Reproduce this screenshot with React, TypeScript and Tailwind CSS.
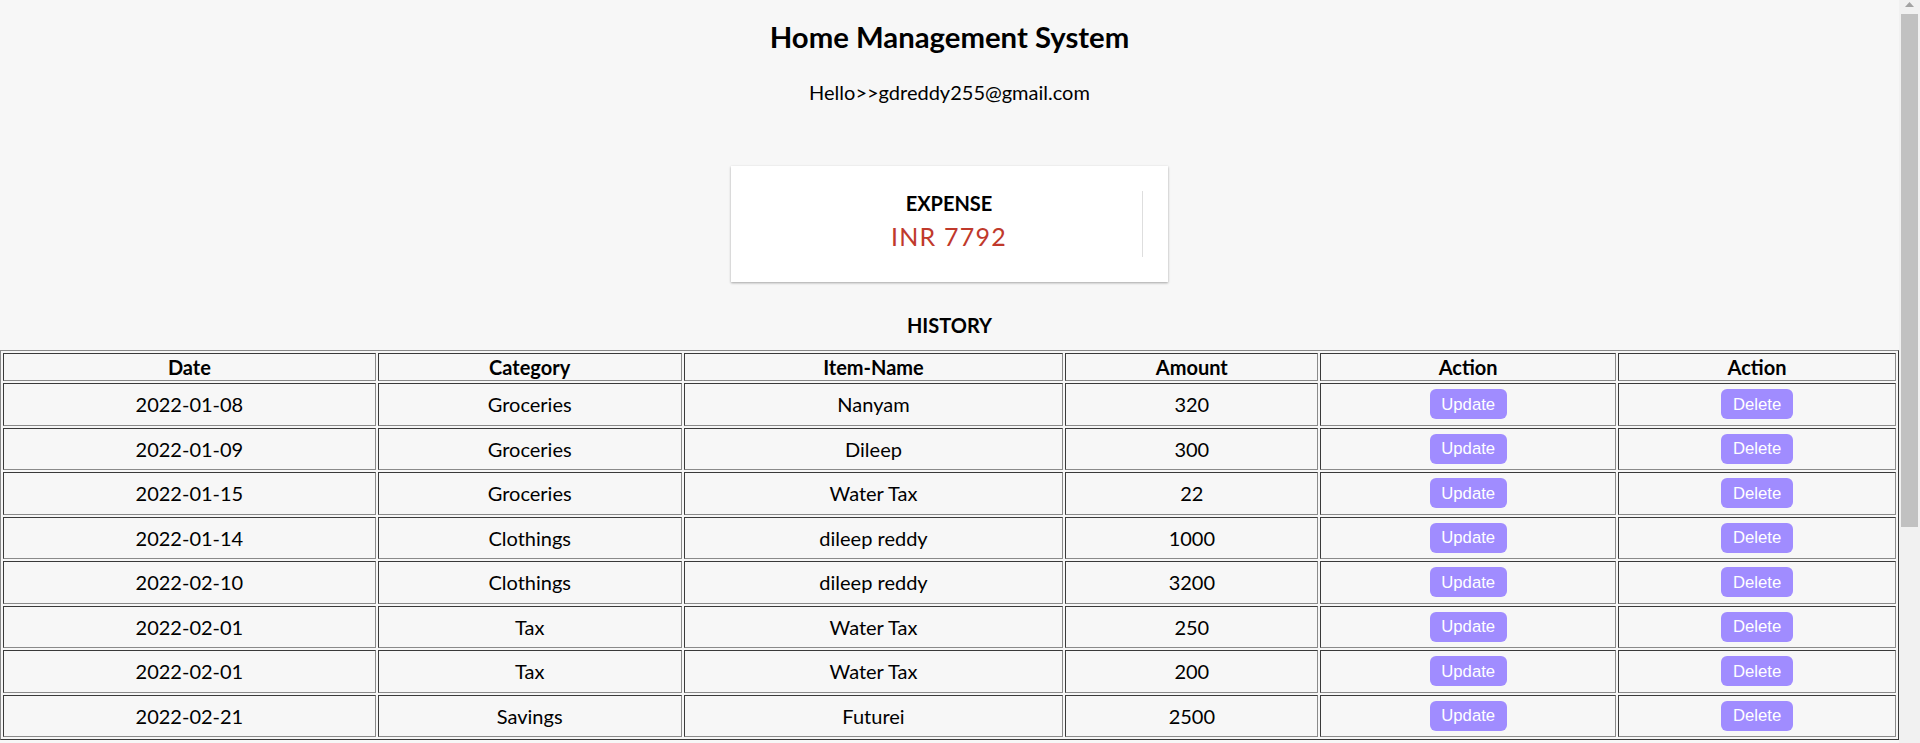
import React from 'react';

type Expense = {
  date: string;
  category: string;
  item: string;
  amount: number;
};

const history: Expense[] = [
  { date: '2022-01-08', category: 'Groceries', item: 'Nanyam', amount: 320 },
  { date: '2022-01-09', category: 'Groceries', item: 'Dileep', amount: 300 },
  { date: '2022-01-15', category: 'Groceries', item: 'Water Tax', amount: 22 },
  { date: '2022-01-14', category: 'Clothings', item: 'dileep reddy', amount: 1000 },
  { date: '2022-02-10', category: 'Clothings', item: 'dileep reddy', amount: 3200 },
  { date: '2022-02-01', category: 'Tax', item: 'Water Tax', amount: 250 },
  { date: '2022-02-01', category: 'Tax', item: 'Water Tax', amount: 200 },
  { date: '2022-02-21', category: 'Savings', item: 'Futurei', amount: 2500 },
];

// cells of a border="1" table: inset grey edges
const cell =
  'border border-t-[#3a3a3a] border-l-[#3a3a3a] border-b-[#8a8a8a] border-r-[#8a8a8a] p-[1px] text-center';

const ActionButton = ({ label }: { label: string }) => (
  <button className="rounded-[6px] bg-[#a08cff] px-[11.5px] py-[5.5px] font-['Liberation_Sans',Arial,sans-serif] text-[16.7px] leading-[19px] text-white">
    {label}
  </button>
);

// window scrollbar as it shows in the screenshot
const Scrollbar = () => (
  <div className="flex w-[21px] shrink-0 flex-col items-center bg-[#f1f1f1]">
    <svg width="9" height="6" viewBox="0 0 9 6" className="mt-[2px]">
      <polygon points="4.5,0 9,5 0,5" fill="#a3a3a3" />
    </svg>
    <div className="mt-[6px] h-[513px] w-[17px] bg-[#c1c1c1]" />
  </div>
);

const App: React.FC = () => {
  return (
    <div className="flex h-screen overflow-hidden bg-[#f7f7f7] font-['Lato',sans-serif] text-[20px] text-black">
      <main className="min-w-0 flex-1">
        <div className="flex flex-col items-center pt-[19px]">
          <h2 className="text-[29.3px] leading-[36px] font-bold">Home Management System</h2>
          <p className="mt-[25px] leading-[24px]">Hello&gt;&gt;gdreddy255@gmail.com</p>

          {/* Expense card */}
          <div className="mt-[62px] flex w-[437px] bg-white p-[25px] shadow-[0_1px_3px_rgba(0,0,0,0.12),0_1px_2px_rgba(0,0,0,0.24)]">
            <div className="flex-1 border-r border-[#dedede] text-center">
              <h4 className="leading-[24px] font-bold uppercase">Expense</h4>
              <p className="my-[6px] text-[25px] leading-[30px] tracking-[1.25px] text-[#c0392b]">INR 7792</p>
            </div>
          </div>

          <h3 className="mt-[31px] leading-[24px] font-bold">HISTORY</h3>
        </div>

        <table className="mt-[13px] w-full border-separate border-spacing-x-[2px] border-spacing-y-[2.5px] border border-t-[#8a8a8a] border-l-[#8a8a8a] border-b-[#3a3a3a] border-r-[#3a3a3a]">
          <thead>
            <tr className="leading-[24px]">
              <th className={`${cell} w-[373px]`}>Date</th>
              <th className={`${cell} w-[304px]`}>Category</th>
              <th className={`${cell} w-[380px]`}>Item-Name</th>
              <th className={`${cell} w-[253px]`}>Amount</th>
              <th className={`${cell} w-[296px]`}>Action</th>
              <th className={`${cell} w-[278px]`}>Action</th>
            </tr>
          </thead>
          <tbody>
            {history.map((row, i) => (
              <tr key={i} className="h-[42.5px] leading-[24px]">
                <td className={cell}>{row.date}</td>
                <td className={cell}>{row.category}</td>
                <td className={cell}>{row.item}</td>
                <td className={cell}>{row.amount}</td>
                <td className={cell}>
                  <ActionButton label="Update" />
                </td>
                <td className={cell}>
                  <ActionButton label="Delete" />
                </td>
              </tr>
            ))}
          </tbody>
        </table>
      </main>
      <Scrollbar />
    </div>
  );
};

export default App;
